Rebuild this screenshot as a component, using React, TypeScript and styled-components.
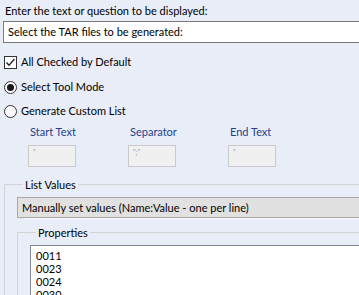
import styled, { createGlobalStyle } from 'styled-components';

const GlobalStyle = createGlobalStyle`
  html, body {
    margin: 0;
    padding: 0;
    background: #e9edf8;
  }
  body {
    font-family: Lato, 'Noto Sans', sans-serif;
    font-size: 11px;
    color: #000;
  }
`;

const Page = styled.div`
  height: 100vh;
  overflow: hidden;
  padding-top: 3px;
  box-sizing: border-box;
`;

const Prompt = styled.div`
  margin-left: 5px;
  line-height: 15px;
  height: 15px;
  white-space: nowrap;
`;

const TextInput = styled.div`
  margin: 3px 0 0 3px;
  width: calc(100% + 20px);
  height: 22px;
  box-sizing: border-box;
  background: #fff;
  border: 1px solid #7a7a7a;
  padding-left: 4px;
  line-height: 20px;
  white-space: nowrap;
`;

const OptionRow = styled.div<{ $top: number }>`
  display: flex;
  align-items: center;
  gap: 4px;
  margin: ${(p) => p.$top}px 0 0 4px;
  height: 14px;
  line-height: 14px;
  white-space: nowrap;
`;

const CheckBox = styled.span`
  width: 13px;
  height: 13px;
  box-sizing: border-box;
  border: 1px solid #333;
  background: #fff;
  display: flex;
  align-items: center;
  justify-content: center;
`;

const Radio = styled.span<{ $checked?: boolean }>`
  width: 13px;
  height: 13px;
  box-sizing: border-box;
  border: 1px solid #333;
  border-radius: 50%;
  background: #fff;
  display: flex;
  align-items: center;
  justify-content: center;
  &::after {
    content: '';
    display: ${(p) => (p.$checked ? 'block' : 'none')};
    width: 7px;
    height: 7px;
    border-radius: 50%;
    background: #1a1a1a;
  }
`;

const Fields = styled.div`
  display: flex;
  margin: 7px 0 0 28px;
`;

const Field = styled.div`
  width: 100px;
  display: flex;
  flex-direction: column;
`;

const FieldLabel = styled.div`
  color: #24418f;
  margin-left: 2px;
  line-height: 14px;
  height: 14px;
`;

const SmallBox = styled.div`
  margin-top: 6px;
  width: 48px;
  height: 22px;
  box-sizing: border-box;
  border: 1px solid #c9c9c9;
  background: #f0f0f0;
  font-size: 7px;
  line-height: 8px;
  color: #86a0c8;
  padding: 2px 0 0 4px;
`;

const Group = styled.fieldset<{ $left: number; $top: number }>`
  margin: ${(p) => p.$top}px 0 0 ${(p) => p.$left}px;
  padding: 0 0 0 12px;
  border: none;
  border-top: 1px solid #d3d3d3;
  border-left: 1px solid #d3d3d3;
  min-width: 0;
`;

const Legend = styled.legend`
  padding: 0 2px;
  margin-left: 6px;
  line-height: 15px;
`;

const Combo = styled.div`
  margin-top: 5px;
  width: calc(100% + 20px);
  height: 21px;
  box-sizing: border-box;
  background: #e1e1e1;
  border: 1px solid #a8a8a8;
  padding-left: 4px;
  line-height: 19px;
  white-space: nowrap;
  box-shadow: 0 8px 0 -7px #f6f8fc;
`;

const ListBox = styled.div`
  margin-top: 5px;
  width: calc(100% + 20px);
  height: 80px;
  box-sizing: border-box;
  background: #fff;
  border: 1px solid #828790;
  padding: 3px 0 0 5px;
  line-height: 13px;
`;

const values = ['0011', '0023', '0024', '0030'];

export default function App() {
  return (
    <>
      <GlobalStyle />
      <Page>
        <Prompt>Enter the text or question to be displayed:</Prompt>
        <TextInput>Select the TAR files to be generated:</TextInput>

        <OptionRow $top={12}>
          <CheckBox>
            <svg width="11" height="11" viewBox="0 0 11 11">
              <path d="M1.5 5.5 L4 8.2 L9.5 2" fill="none" stroke="#222" strokeWidth="1.3" />
            </svg>
          </CheckBox>
          All Checked by Default
        </OptionRow>
        <OptionRow $top={11}>
          <Radio $checked />
          Select Tool Mode
        </OptionRow>
        <OptionRow $top={10}>
          <Radio />
          Generate Custom List
        </OptionRow>

        <Fields>
          <Field>
            <FieldLabel>Start Text</FieldLabel>
            <SmallBox>"</SmallBox>
          </Field>
          <Field>
            <FieldLabel>Separator</FieldLabel>
            <SmallBox>";"</SmallBox>
          </Field>
          <Field>
            <FieldLabel>End Text</FieldLabel>
            <SmallBox>"</SmallBox>
          </Field>
        </Fields>

        <Group $left={4} $top={10}>
          <Legend>List Values</Legend>
          <Combo>Manually set values (Name:Value - one per line)</Combo>
          <Group $left={0} $top={7}>
            <Legend>Properties</Legend>
            <ListBox>
              {values.map((v) => (
                <div key={v}>{v}</div>
              ))}
            </ListBox>
          </Group>
        </Group>
      </Page>
    </>
  );
}
